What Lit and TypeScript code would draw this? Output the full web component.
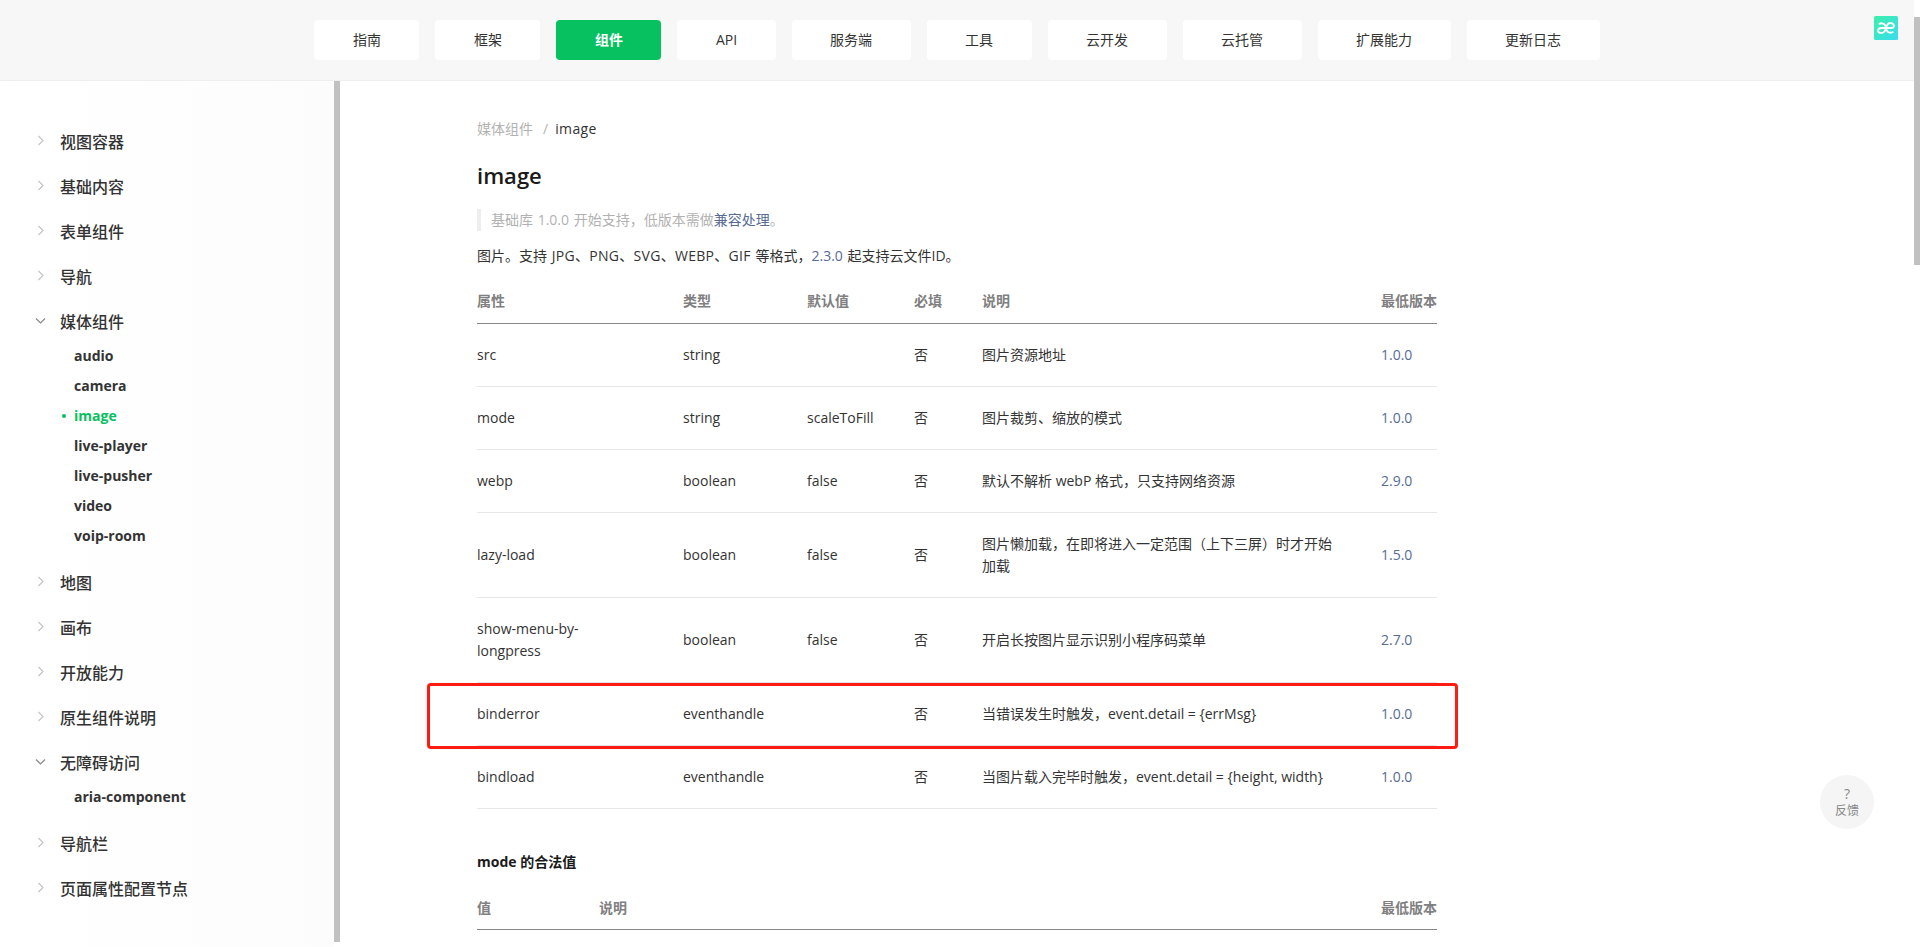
import { LitElement, html, css, nothing } from "lit";
import { customElement } from "lit/decorators.js";

const NAV = ["指南", "框架", "组件", "API", "服务端", "工具", "云开发", "云托管", "扩展能力", "更新日志"];
const SIDE: { t: string; open?: boolean; sub?: string[] }[] = [
  { t: "视图容器" },
  { t: "基础内容" },
  { t: "表单组件" },
  { t: "导航" },
  { t: "媒体组件", open: true, sub: ["audio", "camera", "image", "live-player", "live-pusher", "video", "voip-room"] },
  { t: "地图" },
  { t: "画布" },
  { t: "开放能力" },
  { t: "原生组件说明" },
  { t: "无障碍访问", open: true, sub: ["aria-component"] },
  { t: "导航栏" },
  { t: "页面属性配置节点" },
];
const ROWS = [
  ["src", "string", "", "否", "图片资源地址", "1.0.0"],
  ["mode", "string", "scaleToFill", "否", "图片裁剪、缩放的模式", "1.0.0"],
  ["webp", "boolean", "false", "否", "默认不解析 webP 格式，只支持网络资源", "2.9.0"],
  ["lazy-load", "boolean", "false", "否", "图片懒加载，在即将进入一定范围（上下三屏）时才开始加载", "1.5.0"],
  ["show-menu-by-longpress", "boolean", "false", "否", "开启长按图片显示识别小程序码菜单", "2.7.0"],
  ["binderror", "eventhandle", "", "否", "当错误发生时触发，event.detail = {errMsg}", "1.0.0"],
  ["bindload", "eventhandle", "", "否", "当图片载入完毕时触发，event.detail = {height, width}", "1.0.0"],
];

@customElement("app-root")
export class AppRoot extends LitElement {
  static styles = css`
    :host {
      display: block;
      position: relative;
      height: 947px;
      overflow: hidden;
      background: #fff;
      color: #333;
      font-family: "Open Sans", "Noto Sans CJK SC", sans-serif;
      font-size: 14px;
    }
    a { text-decoration: none; }
    .nav {
      width: 1914px;
      height: 80px;
      box-sizing: content-box;
      border-bottom: 1px solid #eee;
      background: #f7f7f7;
      display: flex;
      justify-content: center;
      align-items: center;
      gap: 16px;
    }
    .nav a {
      height: 40px;
      line-height: 40px;
      padding: 0 38.5px;
      background: #fff;
      border-radius: 4px;
      color: #333;
    }
    .nav a.on { background: #07c160; color: #fff; font-weight: 600; }
    .logo { position: absolute; left: 1874px; top: 16px; width: 24px; height: 24px; }
    .page-bar { position: absolute; left: 1914px; top: 17px; width: 6px; height: 248px; background: #c1c1c1; }
    .body { display: flex; height: 866px; }
    .side {
      width: 334px;
      flex: none;
      background: linear-gradient(to right, #fff, #fcfcfc);
      padding-top: 37px;
      box-sizing: border-box;
    }
    .side-bar { width: 6px; height: 861px; flex: none; background: #c1c1c1; }
    .head {
      height: 45px;
      display: flex;
      align-items: center;
      padding-left: 35px;
      gap: 14px;
      font-size: 16px;
      font-weight: 500;
      color: #333;
    }
    .head svg { width: 11px; height: 11px; flex: none; color: #c4c4c4; }
    .head.open svg { color: #8a8a8a; }
    .subs { list-style: none; margin: -2px 0 8px; padding: 0 0 0 74px; }
    .subs li { height: 30px; line-height: 30px; font-weight: 700; font-size: 14px; color: #333; position: relative; }
    .subs li.on { color: #07c160; }
    .subs li.on::before {
      content: "";
      position: absolute;
      left: -12px;
      top: 13px;
      width: 4px;
      height: 4px;
      border-radius: 50%;
      background: #07c160;
    }
    .main { flex: 1; min-width: 0; padding-left: 137px; }
    .content { width: 960px; }
    .crumb { margin: 38px 0 0; height: 20px; line-height: 20px; color: #333; display: flex; }
    .crumb span.g { color: #b2b2b2; }
    .crumb i { font-style: normal; color: #b2b2b2; margin: 0 7px 0 10px; }
    .crumb .cur { letter-spacing: 0.4px; }
    h1 { font-size: 22px; font-weight: 600; color: #1a1a1a; margin: 21px 0 0; line-height: 30px; }
    .quote {
      margin: 19px 0 0;
      border-left: 4px solid #eee;
      padding-left: 10px;
      height: 22px;
      line-height: 22px;
      color: #b2b2b2;
      word-spacing: 1px;
    }
    .quote a, .link { color: #576b95; }
    .desc { margin: 11px 0 0; line-height: 28px; color: #333; word-spacing: 1px; }
    .desc .caps { letter-spacing: 0.3px; }
    table { border-collapse: collapse; table-layout: fixed; width: 960px; margin-top: 8px; }
    th {
      text-align: left;
      font-weight: 600;
      color: #808080;
      padding: 0;
      height: 45px;
      border-bottom: 1px solid #888;
      box-sizing: border-box;
    }
    td {
      padding: 20px 16px 20px 0;
      line-height: 22px;
      border-bottom: 1px solid #e6e6e6;
      color: #333;
      vertical-align: middle;
    }
    td.c0 { padding-right: 50px; }
    td.c4 { padding-right: 40px; }
    td.c5 { padding-right: 0; color: #576b95; }
    h3 { font-size: 14px; font-weight: 700; color: #1a1a1a; margin: 43px 0 0; line-height: 20px; }
    h3 + table { margin-top: 13px; }
    .mark {
      position: absolute;
      left: 427px;
      top: 683px;
      width: 1031px;
      height: 66px;
      box-sizing: border-box;
      border: 3px solid #ff1a12;
      border-radius: 4px;
    }
    .fb {
      position: absolute;
      left: 1820px;
      top: 775px;
      width: 54px;
      height: 54px;
      border-radius: 50%;
      background: #f5f5f5;
      display: flex;
      flex-direction: column;
      align-items: center;
      justify-content: center;
      color: #888;
      font-size: 12px;
      line-height: 17px;
    }
    .fb b { font-weight: 400; font-size: 14px; }
  `;

  private chev(open?: boolean) {
    return html`<svg viewBox="0 0 11 11" fill="none" stroke="currentColor" stroke-width="1.2">
      <path d=${open ? "M1 3.5 L5.5 8 L10 3.5" : "M3.5 1 L8 5.5 L3.5 10"}></path>
    </svg>`;
  }

  render() {
    return html`
      <div class="nav">
        ${NAV.map((n) => html`<a class=${n === "组件" ? "on" : ""}>${n}</a>`)}
      </div>
      <svg class="logo" viewBox="0 0 24 24">
        <defs>
          <linearGradient id="lg" x1="0" y1="0" x2="1" y2="1">
            <stop offset="0" stop-color="#3df0a8"></stop>
            <stop offset="1" stop-color="#38dcef"></stop>
          </linearGradient>
        </defs>
        <rect width="24" height="24" rx="1.5" fill="url(#lg)"></rect>
        <g fill="none" stroke="#fff" stroke-width="1.8">
          <path d="M4.8 8.4 C6.5 6.8 9.5 6.8 11 9 C12 10.5 12 13.5 13 15 C14.5 17.2 17.5 17.2 19.3 15.6"></path>
          <path d="M12 12 H8 C5.5 12 4 13 4 14.5 C4 16 5.5 17 7.5 17 C9.5 17 11 15.5 12 12.2"></path>
          <path d="M12 12 C12.8 8.7 14.5 7 16.5 7 C18.5 7 20 8.5 20 10 C20 11.5 18.5 12 16.5 12 H12"></path>
        </g>
      </svg>
      <div class="page-bar"></div>
      <div class="body">
        <div class="side">
          ${SIDE.map(
            (g) => html`<div>
              <div class="head ${g.open ? "open" : ""}">${this.chev(g.open)}<span>${g.t}</span></div>
              ${g.sub
                ? html`<ul class="subs">
                    ${g.sub.map((s) => html`<li class=${s === "image" ? "on" : ""}>${s}</li>`)}
                  </ul>`
                : nothing}
            </div>`
          )}
        </div>
        <div class="side-bar"></div>
        <div class="main">
          <div class="content">
            <div class="crumb"><span class="g">媒体组件</span><i>/</i><span class="cur">image</span></div>
            <h1>image</h1>
            <div class="quote">基础库 1.0.0 开始支持，低版本需做<a>兼容处理</a>。</div>
            <div class="desc">图片。支持 <span class="caps">JPG、PNG、SVG、WEBP、GIF</span> 等格式，<a class="link">2.3.0</a> 起支持云文件ID。</div>
            <table>
              <colgroup>
                <col style="width:206px" /><col style="width:124px" /><col style="width:107px" /><col style="width:68px" /><col style="width:399px" /><col style="width:56px" />
              </colgroup>
              <tr><th>属性</th><th>类型</th><th>默认值</th><th>必填</th><th>说明</th><th>最低版本</th></tr>
              ${ROWS.map(
                (r) => html`<tr>
                  ${r.map((c, i) => html`<td class="c${i}">${c}</td>`)}
                </tr>`
              )}
            </table>
            <h3>mode 的合法值</h3>
            <table>
              <colgroup><col style="width:122px" /><col style="width:782px" /><col style="width:56px" /></colgroup>
              <tr><th>值</th><th>说明</th><th>最低版本</th></tr>
            </table>
          </div>
        </div>
      </div>
      <div class="mark"></div>
      <div class="fb"><b>?</b><span>反馈</span></div>
    `;
  }
}
